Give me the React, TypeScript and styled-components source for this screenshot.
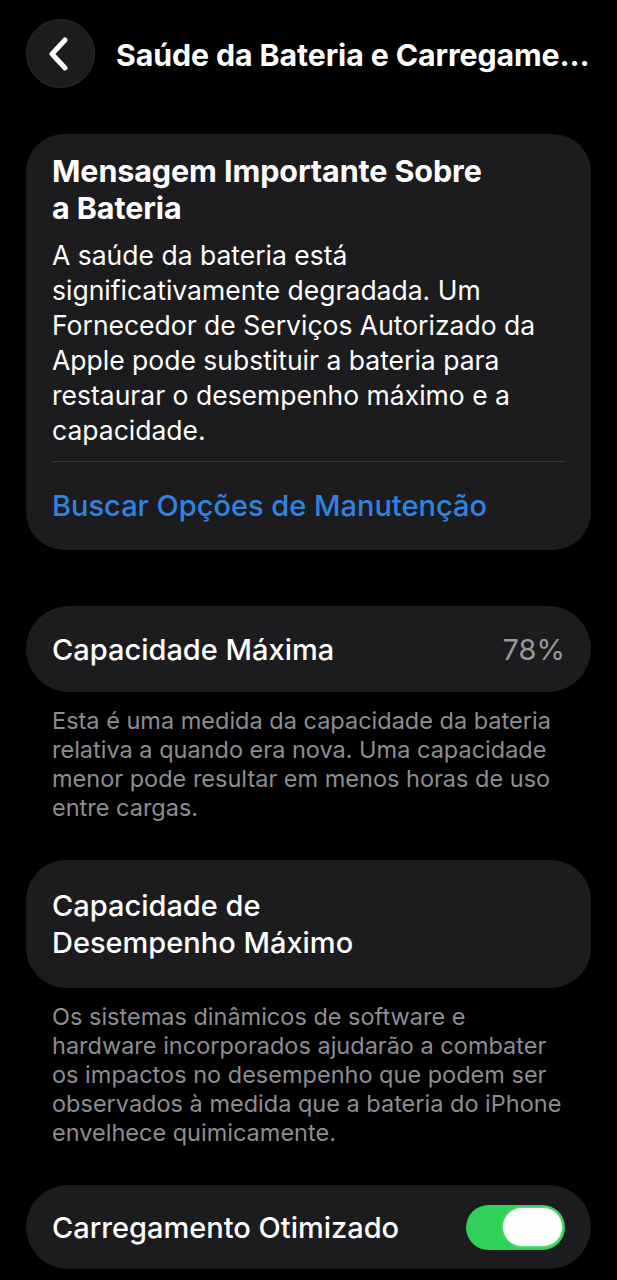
import React from 'react';
import styled, { createGlobalStyle } from 'styled-components';

const GlobalStyle = createGlobalStyle`
  html, body {
    margin: 0;
    padding: 0;
    background: #000;
  }

  body {
    font-family: Inter, "Noto Sans", "Liberation Sans", sans-serif;
    color: #fff;
    -webkit-font-smoothing: antialiased;
  }
`;

const Page = styled.div`
  width: 617px;
  min-height: 1280px;
  background: #000;
  overflow: hidden;
`;

const Header = styled.div`
  display: flex;
  align-items: center;
  gap: 21px;
  padding: 19px 0 0 26px;
  height: 69px;
`;

const BackButton = styled.button`
  flex-shrink: 0;
  width: 69px;
  height: 69px;
  border-radius: 50%;
  border: 1px solid #2c2c2e;
  background: #1c1c1e;
  display: flex;
  align-items: center;
  justify-content: center;
  padding: 0 4px 0 0;

  svg { width: 24px; height: 34px }
`;

const Title = styled.h1`
  margin: 0 0 -3px;
  font-size: 30.3px;
  font-weight: 700;
  letter-spacing: -0.1px;
  white-space: nowrap;
`;

const Content = styled.div`
  display: flex;
  flex-direction: column;
  padding: 46px 26px 0 26px;
`;

const Card = styled.div<{ $radius?: number }>`
  background: #1c1c1e;
  border-radius: ${p => p.$radius ?? 38}px;
  padding: 0 26px;
`;

const MessageBody = styled.div`
  padding: 18px 0 13px;
`;

const MessageTitle = styled.h2`
  margin: 0 0 12px;
  font-size: 30.5px;
  line-height: 37px;
  font-weight: 700;
  letter-spacing: -0.1px;
`;

const MessageText = styled.p`
  margin: 0;
  padding-right: 24px;
  font-size: 26.5px;
  line-height: 35px;
  font-weight: 400;
`;

const Divider = styled.div`
  height: 1px;
  background: #3a3a3c;
`;

const Link = styled.div`
  color: #2f84e0;
  font-size: 29px;
  line-height: 88px;
  font-weight: 500;
`;

const Row = styled.div<{ $height: number }>`
  display: flex;
  align-items: center;
  justify-content: space-between;
  min-height: ${p => p.$height}px;
  font-size: 29px;
  line-height: 37px;
`;

const RowLabel = styled.span`
  font-weight: 500;
`;

const RowValue = styled.span`
  color: #98989d;
`;

const Footer = styled.p`
  margin: 0;
  padding: 14px 26px 38px;
  font-size: 23.5px;
  line-height: 29px;
  color: #8d8d92;
`;

const Spacer = styled.div`
  height: 56px;
`;

const Toggle = styled.div`
  width: 99px;
  height: 45px;
  border-radius: 23px;
  background: #30d158;
  display: flex;
  align-items: center;
  justify-content: flex-end;
  padding: 0 3px;
  box-sizing: border-box;
`;

const Knob = styled.div`
  width: 59px;
  height: 38px;
  border-radius: 19px;
  background: #fff;
  box-shadow: 0 0 3px rgba(255, 255, 255, 0.6);
`;

const Chevron = () => (
  <svg viewBox="0 0 24 34" fill="none">
    <path d="M18 3 L5 17 L18 31" stroke="#fff" strokeWidth="5" strokeLinecap="round" strokeLinejoin="round" />
  </svg>
);

export default function App() {
  return (
    <Page>
      <GlobalStyle />
      <Header>
        <BackButton aria-label="Voltar">
          <Chevron />
        </BackButton>
        <Title>Saúde da Bateria e Carregame...</Title>
      </Header>

      <Content>
        <Card>
          <MessageBody>
            <MessageTitle>Mensagem Importante Sobre<br />a Bateria</MessageTitle>
            <MessageText>
              A saúde da bateria está significativamente degradada. Um Fornecedor de Serviços Autorizado da Apple pode substituir a bateria para restaurar o desempenho máximo e a capacidade.
            </MessageText>
          </MessageBody>
          <Divider />
          <Link>Buscar Opções de Manutenção</Link>
        </Card>

        <Spacer />

        <Card $radius={43}>
          <Row $height={86}>
            <RowLabel>Capacidade Máxima</RowLabel>
            <RowValue>78%</RowValue>
          </Row>
        </Card>
        <Footer>
          Esta é uma medida da capacidade da bateria relativa a quando era nova. Uma capacidade menor pode resultar em menos horas de uso entre cargas.
        </Footer>

        <Card $radius={40}>
          <Row $height={128}>
            <RowLabel>Capacidade de<br />Desempenho Máximo</RowLabel>
          </Row>
        </Card>
        <Footer>
          Os sistemas dinâmicos de software e hardware incorporados ajudarão a combater os impactos no desempenho que podem ser observados à medida que a bateria do iPhone envelhece quimicamente.
        </Footer>

        <Card $radius={42}>
          <Row $height={84}>
            <RowLabel>Carregamento Otimizado</RowLabel>
            <Toggle>
              <Knob />
            </Toggle>
          </Row>
        </Card>
      </Content>
    </Page>
  );
}
